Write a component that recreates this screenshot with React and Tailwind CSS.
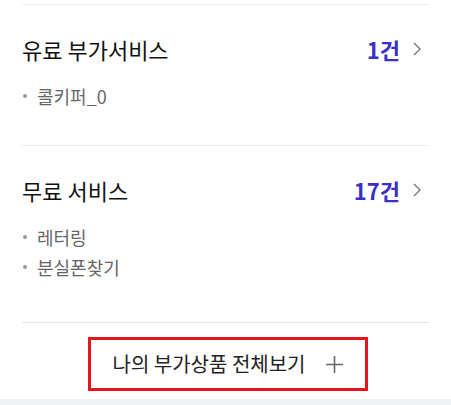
const FONT = { fontFamily: '"Noto Sans CJK KR", "Noto Sans", sans-serif' };

function Section({ title, count, items, bottom }) {
    return (
        <section className={`border-t border-[#ececec] pt-[30px] ${bottom}`}>
            <div className="flex items-center justify-between h-[28px]">
                <h2 className="text-[22px] leading-[28px] text-[#111] font-normal">{title}</h2>
                <div className="flex items-center gap-[13px] pr-[8px]">
                    <span className="text-[22px] leading-[28px] font-bold text-[#3a2fc9]">{count}</span>
                    {/* chevron */}
                    <svg width="8" height="14" viewBox="0 0 8 14" fill="none">
                        <path d="M1 1L7 7L1 13" stroke="#777" strokeWidth="1.4" />
                    </svg>
                </div>
            </div>
            <ul className="mt-[18px]">
                {items.map((it) => (
                    <li key={it} className="flex items-center h-[30px] text-[18px] text-[#666]">
                        <span className="w-[4px] h-[4px] rounded-full bg-[#999] ml-[1px] mr-[10px]"></span>
                        {it}
                    </li>
                ))}
            </ul>
        </section>
    );
}

export default function App() {
    return (
        <div className="w-full h-[405px] bg-white overflow-hidden" style={FONT}>
            <div className="mx-[22px] pt-[4px]">
                <Section title="유료 부가서비스" count="1건" items={['콜키퍼_0']} bottom="pb-[34px]" />
                <Section title="무료 서비스" count="17건" items={['레터링', '분실폰찾기']} bottom="pb-[40px]" />
                <div className="border-t border-[#e4e4e6] pt-[14px]">
                    <button className="ml-[66px] w-[280px] h-[54px] border-[3px] border-[#e8141c] flex items-center justify-center gap-[20px] pl-[1px]">
                        <span className="text-[20px] text-[#222]">나의 부가상품 전체보기</span>
                        <svg width="19" height="19" viewBox="0 0 19 19" fill="none">
                            <path d="M9.5 1V18M1 9.5H18" stroke="#666" strokeWidth="1.6" />
                        </svg>
                    </button>
                </div>
            </div>
            <div className="mt-[8px] h-[10px] bg-[#f0f1f3]"></div>
        </div>
    );
}
